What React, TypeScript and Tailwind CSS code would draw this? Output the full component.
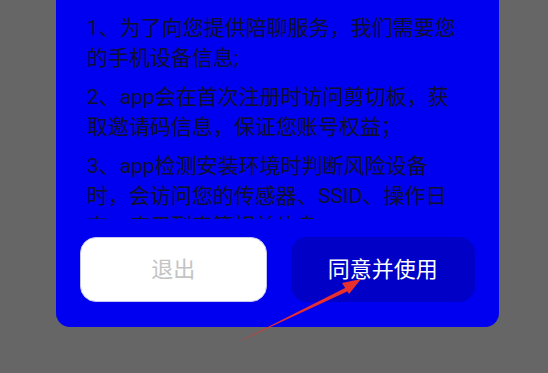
export default function App() {
  const items = [
    '1、为了向您提供陪聊服务，我们需要您的手机设备信息;',
    '2、app会在首次注册时访问剪切板，获取邀请码信息，保证您账号权益；',
    '3、app检测安装环境时判断风险设备时，会访问您的传感器、SSID、操作日志，应用列表等相关信息；',
  ];

  return (
    <div
      className="relative w-[548px] h-[373px] bg-[#666666] overflow-hidden"
      style={{ fontFamily: "Roboto, 'Noto Sans CJK SC', sans-serif" }}
    >
      <div className="ml-[56px] w-[443px] bg-[#0000f0] rounded-b-[14px] pb-[25px]">
        {/* scrollable terms */}
        <div className="h-[219px] overflow-hidden pt-[13px] pl-[31px]">
          <div className="w-[377px] flex flex-col gap-[9px]">
            {items.map((t) => (
              <p key={t} className="text-[21px] leading-[30px] text-[#10102e]">
                {t}
              </p>
            ))}
          </div>
        </div>

        {/* buttons */}
        <div className="mt-[18px] px-[24px] flex gap-[24px]">
          <button className="flex-1 h-[65px] rounded-[16px] bg-white border border-[#c6c6ee] text-[22px] text-[#c4c4c4]">
            退出
          </button>
          <button className="flex-1 h-[65px] rounded-[16px] bg-[#0000c6] text-[22px] text-white">
            同意并使用
          </button>
        </div>
      </div>

      {/* red annotation arrow */}
      <svg className="absolute left-0 top-0 pointer-events-none" width="548" height="373">
        <path d="M238 342 L350 285.5 L351.5 289.5 Z" fill="#e8302f" />
        <path d="M361 279 L342 283 L349 294 Z" fill="#e8302f" />
      </svg>
    </div>
  );
}
